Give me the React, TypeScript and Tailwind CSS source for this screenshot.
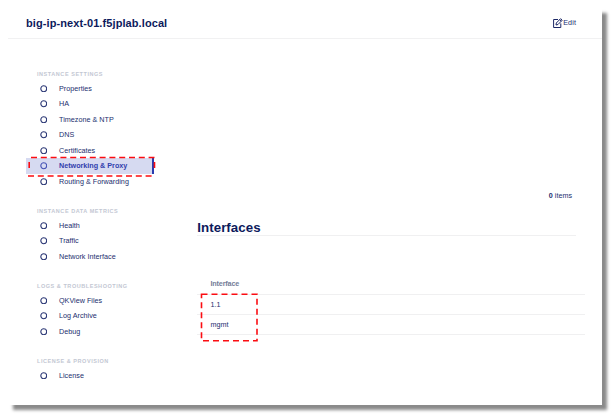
const groups = [
  { title: 'INSTANCE SETTINGS', items: ['Properties', 'HA', 'Timezone & NTP', 'DNS', 'Certificates', 'Networking & Proxy', 'Routing & Forwarding'] },
  { title: 'INSTANCE DATA METRICS', items: ['Health', 'Traffic', 'Network Interface'] },
  { title: 'LOGS & TROUBLESHOOTING', items: ['QKView Files', 'Log Archive', 'Debug'] },
  { title: 'LICENSE & PROVISION', items: ['License'] },
];

function NavItem({ label }: { label: string }) {
  const active = label === 'Networking & Proxy';
  return (
    <li className={`flex h-[15.5px] items-center pl-[13.7px] ${active ? 'border-r-[2px] border-[#2a3cae] bg-[#d6daf1] font-bold text-[#3140ad]' : 'text-[#222e6e]'}`}>
      <svg className="mr-[11.8px] size-[7.5px] shrink-0" viewBox="0 0 7.5 7.5" fill="none">
        <circle cx="3.75" cy="3.75" r="2.95" stroke={active ? '#4552b5' : '#2b3775'} strokeWidth="1.1" />
      </svg>
      <span className={`pt-[1px] ${active ? 'tracking-[0px]' : 'tracking-[0.02px]'}`}>{label}</span>
    </li>
  );
}

export default function App() {
  return (
    <div className="h-[414px] w-[612px] overflow-hidden bg-white pt-[8px] pl-[8px] font-['Liberation_Sans',Arial,sans-serif] text-[7.2px] whitespace-nowrap text-[#222e6e] antialiased">
      <div className="relative flex h-[397px] w-[594px] flex-col bg-white shadow-[5px_5px_3px_0px_#8a8a8a]">
        <header className="flex h-[31px] items-center justify-between border-b border-[#f1f1f2] pr-[26px] pl-[18px]">
          <h1 className="text-[11px] font-bold tracking-[0.09px] text-[#0d1a5c]">big-ip-next-01.f5jplab.local</h1>
          <button className="flex items-center">
            <svg className="size-[10px]" viewBox="0 0 10 10" fill="none" stroke="#1b2765" strokeWidth="1">
              <path d="M5 1.5H.6v8h7.2V5.4M3.3 5 7.6.7l1.6 1.5L5 6.5l-2 .5zM6.6 1.7l1.6 1.6" />
            </svg>
            <span className="tracking-[0.1px]">Edit</span>
          </button>
        </header>
        <div className="flex flex-1">
          <nav className="w-[146px] pt-[28.7px] pl-[18px]">
            {groups.map((g) => (
              <section key={g.title} className="mb-[15.5px]">
                <h2 className="flex h-[13px] items-center pb-[0.5px] pl-[11px] text-[5.5px] font-bold tracking-[0.55px] text-[#c3c7d3]">{g.title}</h2>
                <ul>{g.items.map((i) => <NavItem key={i} label={i} />)}</ul>
              </section>
            ))}
          </nav>
          <main className="ml-[43.3px] w-[387.7px] pt-[151px]">
            <div className="flex h-[12px] items-center justify-end pr-[13px]"><b className="mr-[2px]">0</b> items</div>
            <h2 className="mt-[15px] mr-[9px] flex h-[19px] items-center border-b border-[#f0f0f1] pt-[3.5px] text-[13.3px] font-bold tracking-[0.05px] text-[#0d1a5c]">Interfaces</h2>
            <table className="mt-[38px] w-full border-collapse text-left">
              <thead>
                <tr className="h-[20px] border-b border-[#f0f0f1]"><th className="p-0 pt-[2px] pl-[13.2px] font-bold tracking-[-0.15px] text-[#757d98]">Interface</th></tr>
              </thead>
              <tbody>
                <tr className="h-[20px] border-b border-[#f0f0f1]"><td className="p-0 pt-[2px] pl-[13.2px]">1.1</td></tr>
                <tr className="h-[20px] border-b border-[#f0f0f1]"><td className="p-0 pt-[2px] pl-[13.2px]">mgmt</td></tr>
              </tbody>
            </table>
          </main>
        </div>
        <svg className="absolute top-[148px] left-[20px] h-[21px] w-[128px]" viewBox="0 0 128 21" fill="none" stroke="#fb0d12" strokeWidth="1.6">
          <path d="M3 1.5H126.5M126.5 6V13M1.2 6V13M0 20H126.5" strokeDasharray="6 3.8" />
        </svg>
        <svg className="absolute top-[285px] left-[192px] h-[49px] w-[59px]" viewBox="0 0 59 49" fill="none" stroke="#fb0d12" strokeWidth="1.6">
          <path d="M1.5 1.2H57V47.7H1.5Z" strokeDasharray="6 4" />
        </svg>
      </div>
    </div>
  );
}
